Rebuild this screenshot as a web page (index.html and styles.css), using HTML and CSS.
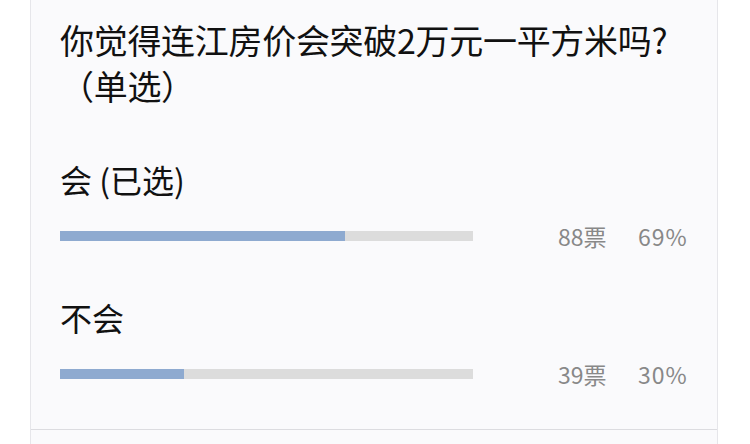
FILE: index.html
```html
<!DOCTYPE html>
<html lang="zh">
<head>
<meta charset="utf-8">
<link rel="stylesheet" href="styles.css">
</head>
<body>
<div class="card">
  <div class="poll">
    <h1 class="title">你觉得连江房价会突破2万元一平方米吗?<br>（单选）</h1>
    <div class="option">
      <div class="label">会 (已选)</div>
      <div class="row">
        <div class="track"><div class="fill" style="width:69%"></div></div>
        <span class="count">88票</span>
        <span class="pct">69%</span>
      </div>
    </div>
    <div class="option">
      <div class="label">不会</div>
      <div class="row">
        <div class="track"><div class="fill" style="width:30%"></div></div>
        <span class="count">39票</span>
        <span class="pct">30%</span>
      </div>
    </div>
  </div>
  <div class="footer"></div>
</div>
</body>
</html>
```
FILE: styles.css
```css
html, body {
  margin: 0;
  padding: 0;
  background: #ffffff;
}
body {
  font-family: "Noto Sans CJK SC", "Noto Sans", sans-serif;
  color: #111111;
}
.card {
  margin-left: 30px;
  width: 686px;
  height: 444px;
  background: #fafafc;
  border-left: 1px solid #e6e6ea;
  border-right: 1px solid #e6e6ea;
  display: flex;
  flex-direction: column;
}
.poll {
  height: 399px;
  padding: 17px 0 13px 29px;
  border-bottom: 1px solid #dcdce0;
}
.title {
  margin: 0;
  font-size: 34px;
  font-weight: 400;
  line-height: 46px;
  letter-spacing: -0.3px;
}
.option {
  margin-top: 50px;
}
.option + .option {
  margin-top: 46px;
}
.label {
  font-size: 32px;
  line-height: 40px;
}
.row {
  display: flex;
  align-items: center;
  margin-top: 22px;
  height: 30px;
}
.track {
  width: 413px;
  height: 10px;
  background: #dcdcdc;
}
.fill {
  height: 100%;
  background: #8eaad0;
}
.count {
  margin-left: 85px;
  width: 80px;
  font-size: 23px;
  color: #888888;
}
.pct {
  font-size: 23px;
  letter-spacing: 1px;
  color: #888888;
}
.footer {
  flex: 1;
}
```
